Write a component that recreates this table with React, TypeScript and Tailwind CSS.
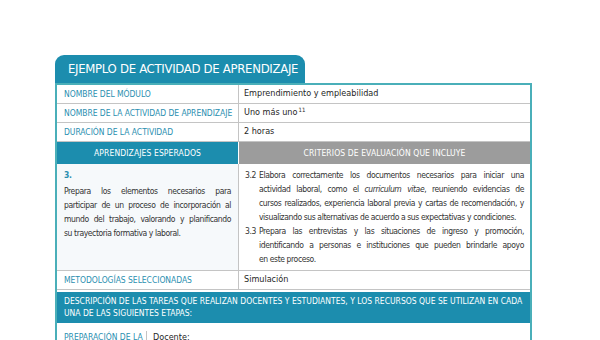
import React from "react";

const font = { fontFamily: '"DejaVu Sans Condensed", "Liberation Sans", sans-serif' };

function Row({ label, children }: { label: string; children: React.ReactNode }) {
  return (
    <div className="grid grid-cols-[182px_1fr] h-[19px] border-b border-[#c4c4c4]">
      <div className="flex items-center pl-[7px] text-[8.5px] tracking-[-0.05px] text-[#2a8fb0] border-r border-[#c4c4c4] whitespace-nowrap">{label}</div>
      <div className="flex items-center pl-[5px] text-[9px] text-[#262626]">{children}</div>
    </div>
  );
}

function Lines({ lines }: { lines: React.ReactNode[] }) {
  return (
    <div>
      {lines.map((l, i) => (
        <div
          key={i}
          className={
            i < lines.length - 1
              ? "whitespace-nowrap text-justify [text-align-last:justify]"
              : "whitespace-nowrap"
          }
        >
          {l}
        </div>
      ))}
    </div>
  );
}

export default function App() {
  return (
    <div className="w-[600px] h-[340px] bg-white overflow-hidden" style={font}>
      <div className="ml-[55px] pt-[55px] w-[477px]">
        <div className="w-[250px] h-[28px] rounded-t-[9px] bg-[#1c8dae] text-white text-[13px] tracking-[-0.3px] pl-[13px] flex items-center whitespace-nowrap">
          EJEMPLO DE ACTIVIDAD DE APRENDIZAJE
        </div>
        <div className="border-x-2 border-t-2 border-[#4aafb9]">
          <Row label="NOMBRE DEL MÓDULO">Emprendimiento y empleabilidad</Row>
          <Row label="NOMBRE DE LA ACTIVIDAD DE APRENDIZAJE">
            <span>
              Uno más uno<sup className="text-[6px] ml-[1px]">11</sup>
            </span>
          </Row>
          <Row label="DURACIÓN DE LA ACTIVIDAD">2 horas</Row>
          <div className="grid grid-cols-[182px_1fr] h-[22px] text-white text-[8.5px] tracking-[0.1px]">
            <div className="bg-[#1c8dae] flex items-center justify-center border-r border-white">APRENDIZAJES ESPERADOS</div>
            <div className="bg-[#9c9c9c] flex items-center justify-center">CRITERIOS DE EVALUACIÓN QUE INCLUYE</div>
          </div>
          <div className="grid grid-cols-[182px_1fr] h-[107px] border-b border-[#c4c4c4] text-[8.5px] tracking-[-0.4px] leading-[14px] text-[#333]">
            <div className="bg-[#f6f9fb] border-r border-[#c4c4c4] pl-[7px] pr-[7px] pt-[4px]">
              <div className="text-[#2a8fb0] font-bold">3.</div>
              <div className="mt-[2px]">
                <Lines
                  lines={[
                    "Prepara los elementos necesarios para",
                    "participar de un proceso de incorporación al",
                    "mundo del trabajo, valorando y planificando",
                    "su trayectoria formativa y laboral.",
                  ]}
                />
              </div>
            </div>
            <div className="pl-[6px] pr-[6px] pt-[4px]">
              <div className="flex">
                <span className="w-[14px] shrink-0">3.2</span>
                <div className="flex-1">
                  <Lines
                    lines={[
                      "Elabora correctamente los documentos necesarios para iniciar una",
                      <>actividad laboral, como el <i>curriculum vitae</i>, reuniendo evidencias de</>,
                      "cursos realizados, experiencia laboral previa y cartas de recomendación, y",
                      "visualizando sus alternativas de acuerdo a sus expectativas y condiciones.",
                    ]}
                  />
                </div>
              </div>
              <div className="flex">
                <span className="w-[14px] shrink-0">3.3</span>
                <div className="flex-1">
                  <Lines
                    lines={[
                      "Prepara las entrevistas y las situaciones de ingreso y promoción,",
                      "identificando a personas e instituciones que pueden brindarle apoyo",
                      "en este proceso.",
                    ]}
                  />
                </div>
              </div>
            </div>
          </div>
          <Row label="METODOLOGÍAS SELECCIONADAS">Simulación</Row>
          <div className="h-[2px]" />
          <div className="bg-[#1c8dae] text-white text-[8.5px] leading-[12px] tracking-[0px] px-[7px] pt-[3px] h-[31px]">
            <div className="whitespace-nowrap">DESCRIPCIÓN DE LAS TAREAS QUE REALIZAN DOCENTES Y ESTUDIANTES, Y LOS RECURSOS QUE SE UTILIZAN EN CADA</div>
            <div className="whitespace-nowrap">UNA DE LAS SIGUIENTES ETAPAS:</div>
          </div>
          <div className="grid grid-cols-[90px_1fr] h-[40px] pt-[8px]">
            <div className="pl-[7px] text-[8.5px] text-[#2a8fb0] border-r border-[#c4c4c4] whitespace-nowrap">PREPARACIÓN DE LA</div>
            <div className="pl-[6px] text-[9px] text-[#262626]">Docente:</div>
          </div>
        </div>
      </div>
    </div>
  );
}
